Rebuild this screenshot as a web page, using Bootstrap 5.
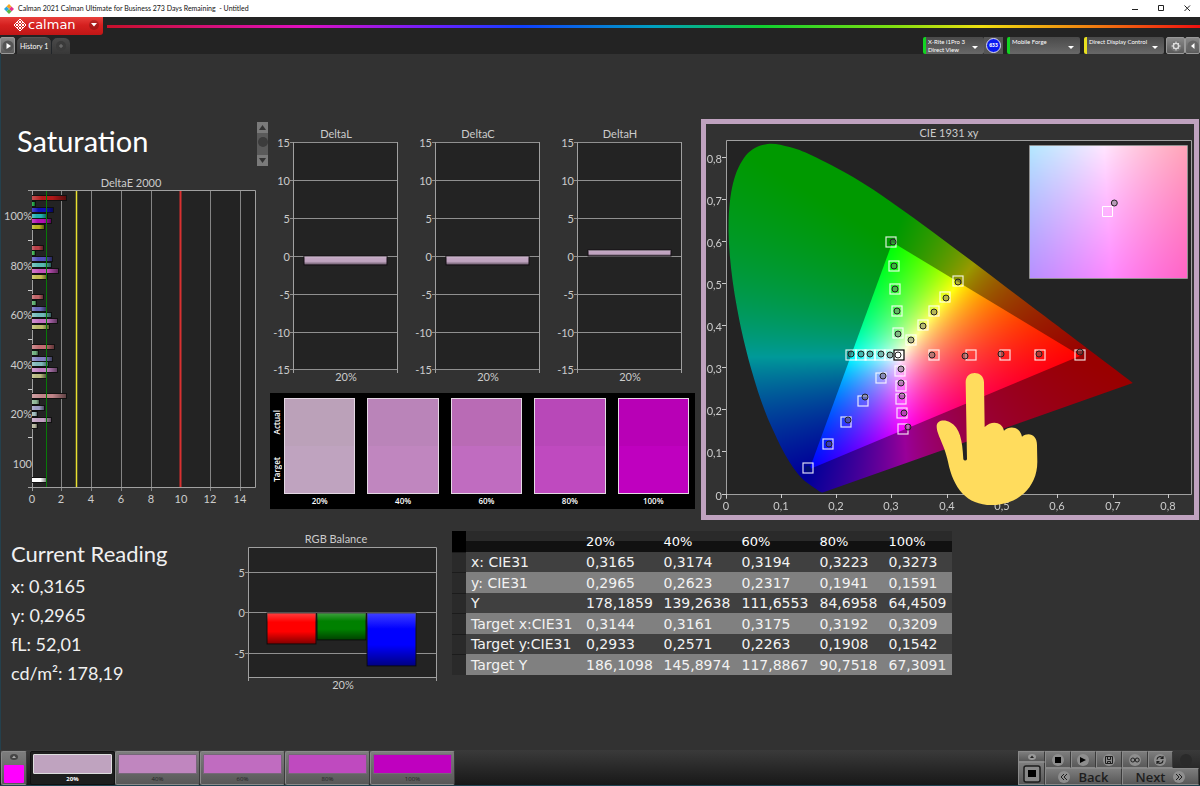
<!DOCTYPE html>
<html lang="en">
<head>
<meta charset="utf-8">
<meta name="viewport" content="width=device-width, initial-scale=1">
<title>Calman 2021 - Untitled</title>
<link href="https://cdn.jsdelivr.net/npm/bootstrap@5.3.0/dist/css/bootstrap.min.css" rel="stylesheet">
<style>
  body { background: #323232; color: #fff; font-family: Lato, "Liberation Sans", sans-serif; font-size: 12px; line-height: 16px; }
  button { color: inherit; border: 0; padding: 0; }
  svg { display: block; }

  .titlebar { background: #fff; color: #111; height: 17px; font-size: 7px; line-height: 17px; padding-left: 4px; }
  .titlebar .wintitle { white-space: pre; }
  .win-btn { background: none; width: 26px; height: 17px; display: grid; place-items: center; color: #222; }

  .topstrip { background: #232323; }
  .brand { width: 103px; height: 18px; background: linear-gradient(#e8403c, #d5201f 45%, #c01616); border-radius: 0 0 3px 0; font: 13px/16px "DejaVu Sans", sans-serif; padding: 0 4px 2px 13px; gap: 1px; }
  .round-caret { width: 10px; height: 10px; border-radius: 50%; background: #00000030; display: grid; place-items: center; }
  .rainbow { height: 3px; background: linear-gradient(90deg, #c8102a 0, #e010c0 18%, #6a20ff 30%, #1040ff 38%, #00a0c0 50%, #10d030 60%, #80e010 72%, #f0e010 80%, #f08010 90%, #f01010); }
  .toolrow { padding-top: 2px; height: 19px; }
  .grey-btn { background: linear-gradient(#8a8a8a, #5a5a5a); border: 1px solid #999; border-radius: 2px; height: 17px; display: grid; place-items: center; }
  .hist-tab { background: linear-gradient(#4a4a4a, #383838); height: 17px; font-size: 7px; line-height: 17px; border-top: 1px solid #555; padding: 0 3px; }
  .source { height: 17px; background: linear-gradient(#4a4a4a, #686868); border-radius: 2px; font-size: 6px; line-height: 8px; padding: 1px 6px 0 2px; text-align: left; border-left: 3px solid #12d422; }
  .source.warn { border-left-color: #e8e020; }
  .count { width: 19px; height: 17px; background: #555; display: grid; place-items: center; }
  .count span { width: 15px; height: 15px; border-radius: 50%; background: #0a1af0; border: 1px solid #dde; font: bold 5px/13px "Open Sans", sans-serif; text-align: center; }

  .workspace { padding-top: 65px; box-shadow: inset 1px 0 #24404c; }
  .upper { display: grid; grid-template-columns: minmax(0, 270fr) minmax(0, 431fr) minmax(0, 499fr); }
  .lower { display: grid; grid-template-columns: minmax(0, 228fr) minmax(0, 224fr) minmax(0, 500fr) minmax(0, 248fr); margin-top: 10px; }
  .upper svg.plot, .lower svg.plot { width: 100%; height: auto; }
  .plot text { font-family: Lato, sans-serif; font-size: 11px; fill: #ccc; }

  .page-title { font-size: 29px; line-height: 40px; font-weight: 400; margin: 2px 0 0 17px; }
  .scroller { width: 11px; height: 44px; background: #5a5a5a; margin: 3px 2px 0 0; border-radius: 1px; }
  .scroller button { width: 11px; height: 11px; background: #7a7a7a; display: grid; place-items: center; }
  .scroller .thumb { width: 10px; height: 10px; border-radius: 50%; background: #3c3c3c; }

  .swatches { background: #000; margin-right: 6px; padding: 5px 6px 0 0; height: 116px; font: 600 8px/14px "Open Sans", sans-serif; }
  .side-label { width: 14px; height: 96px; }
  .side-label span { writing-mode: vertical-rl; transform: rotate(180deg); line-height: 14px; }
  .swatch-grid { display: grid; grid-template-columns: repeat(5, minmax(0, 1fr)); gap: 12px; flex: 1; text-align: center; }
  .patch { height: 96px; border: 1px solid #e4d8e4; }

  .cie { border: 5px solid #bfa2bf; margin-right: 1px; }

  .reading h2 { font-size: 22px; line-height: 28px; margin: 10px 0 4px; font-weight: 400; }
  .reading { padding-left: 11px; font-size: 18px; line-height: 29px; color: #f0f0f0; }

  .data { font: 14px/20px "DejaVu Sans", sans-serif; color: #f2f2f2; width: 100%; table-layout: fixed; border-collapse: collapse; margin-top: 1px; }
  .data td, .data th { padding: 0 0 0 5px; font-weight: 400; white-space: nowrap; height: 20px; }
  .data thead th { height: 21px; font-size: 13px; background: linear-gradient(#2a2a2a 50%, #111 50%); color: #fff; }
  .data thead th:first-child { background: #000; }
  .data tbody tr { background: #404040; }
  .data tbody tr:nth-child(even) { background: #808080; }
  .data tbody tr:nth-child(even) td { height: 21px; }
  .data tbody td:first-child { background: #2a2a2a; border-top: 1px solid #1c1c1c; }

  .bottombar { background: linear-gradient(#3a3a3a, #181818); height: 36px; padding: 1px 1px 0 1px; border-bottom: 1px solid #1f4350; }
  .metal { background: linear-gradient(#7d7d7d, #585858); border: 1px solid #8a8a8a; border-right-color: #3a3a3a; }
  .level { width: 85px; height: 34px; padding: 2px; font: 6px/9px "Open Sans", sans-serif; color: #222; border-radius: 2px; }
  .level .chip { height: 20px; border: 1px solid #77677a; border-radius: 1px; margin-bottom: 1px; }
  .level.active { background: #1e1e1e; border-color: #111; color: #fff; font-weight: 700; }
  .level.active .chip { border-color: #ddd; }
  .current { width: 26px; height: 34px; border-radius: 2px; margin-right: 3px; }
  .current .hue { width: 20px; height: 18px; background: #f0f; border-radius: 1px; margin: 5px auto 0; }
  .dot { width: 12px; height: 12px; border-radius: 50%; background: #8e8e8e; display: grid; place-items: center; color: #1e1e1e; }
  .transport { width: 154px; display: grid; grid-template-columns: repeat(6, minmax(0, 1fr)); grid-template-rows: 17px 17px; }
  .transport button { display: flex; align-items: center; justify-content: center; color: #1e1e1e; }
  .transport .nav-btn { grid-column: span 3; font: 600 13px/16px "Open Sans", sans-serif; gap: 8px; }
</style>
</head>
<body>
<div class="d-flex flex-column min-vh-100">

  <header>
    <div class="titlebar d-flex align-items-center">
      <svg width="10" height="10" viewBox="0 0 10 10" class="me-1" aria-hidden="true">
        <path d="M5 0 7.500 2.500 5 5 2.500 2.500z" fill="#f5a623"/><path d="M2.500 2.500 5 5 2.500 7.500 0 5z" fill="#29a8df"/><path d="M7.500 2.500 10 5 7.500 7.500 5 5z" fill="#e8348b"/><path d="M5 5 7.500 7.500 5 10 2.500 7.500z" fill="#58b947"/>
      </svg>
      <span class="wintitle">Calman 2021 Calman Ultimate for Business 273 Days Remaining  - Untitled</span>
      <div class="d-flex ms-auto">
        <button class="win-btn" aria-label="Minimize"><svg width="6" height="6"><path d="M0 3.500h6" stroke="#222"/></svg></button>
        <button class="win-btn" aria-label="Maximize"><svg width="7" height="7"><path d="M.5.5h5v5h-5z" fill="none" stroke="#222"/></svg></button>
        <button class="win-btn" aria-label="Close"><svg width="7" height="7"><path d="M.5.5l5.500 5.500M6 .5L.5 6" stroke="#222"/></svg></button>
      </div>
    </div>
    <div class="topstrip">
      <div class="d-flex">
        <button class="brand d-flex align-items-center">
          <svg width="14" height="14" viewBox="0 0 14 14" fill="none" stroke="#fff" aria-hidden="true">
            <path d="M7 1 13 7 7 13 1 7zM4 4 10 10M10 4 4 10M5.500 2.500 11.500 8.500M8.500 2.500 2.500 8.500M2.500 5.500 8.500 11.500M11.500 5.500 5.500 11.500" stroke-width="1"/>
          </svg>
          <span>calman</span>
          <span class="round-caret ms-auto"><svg width="6" height="4"><path d="M0 0h6L3 3.500z" fill="#fff"/></svg></span>
        </button>
        <div class="rainbow flex-grow-1 ms-1 mt-2"></div>
      </div>
      <div class="toolrow d-flex">
        <button class="grey-btn" style="width:15px" aria-label="Play"><svg width="12" height="12"><circle cx="6" cy="6" r="5.500" fill="#555"/><path d="M4.500 3v6L9 6z" fill="#fff"/></svg></button>
        <button class="hist-tab rounded-top" style="margin-left:2px">History 1</button>
        <button class="hist-tab rounded-top border-start border-dark" aria-label="Add"><svg width="12" height="10"><circle cx="6" cy="5" r="5" fill="#3a3a3a"/><path d="M4 5h4M6 3v4" stroke="#777"/></svg></button>
        <div class="d-flex ms-auto">
          <button class="source d-flex" style="width:61px"><span class="flex-grow-1 text-nowrap">X-Rite i1Pro 3<br>Direct View</span><svg class="mt-2" width="6" height="4"><path d="M0 0h6L3 3z" fill="#fff"/></svg></button>
          <div class="count me-1"><span>633</span></div>
          <button class="source d-flex me-1" style="width:73px"><span class="flex-grow-1 text-nowrap">Mobile Forge</span><svg class="mt-2" width="6" height="4"><path d="M0 0h6L3 3z" fill="#fff"/></svg></button>
          <button class="source warn d-flex" style="width:80px"><span class="flex-grow-1 text-nowrap">Direct Display Control</span><svg class="mt-2" width="6" height="4"><path d="M0 0h6L3 3z" fill="#fff"/></svg></button>
          <button class="grey-btn" style="width:19px;margin-left:2px" aria-label="Settings"><svg width="12" height="12"><circle cx="6" cy="6" r="5.500" fill="#777"/><circle cx="6" cy="6" r="2.600" fill="none" stroke="#ddd" stroke-width="1.400"/><path d="M6 1.500v9M1.500 6h9M3 3l6 6M9 3l-6 6" stroke="#ddd" stroke-dasharray="1.500 6 1.500"/></svg></button>
          <button class="grey-btn" style="width:15px" aria-label="Collapse"><svg width="12" height="12"><circle cx="6" cy="6" r="5.500" fill="#666"/><path d="M7.500 3v6L4 6z" fill="#fff"/></svg></button>
        </div>
      </div>
    </div>
  </header>

  <main class="workspace flex-grow-1">
    <section class="upper">
      <div>
        <div class="d-flex justify-content-between">
          <h1 class="page-title">Saturation</h1>
          <div class="scroller d-flex flex-column align-items-center">
            <button aria-label="Up"><svg width="7" height="5"><path d="M0 5h7L3.500 0z" fill="#333"/></svg></button>
            <div class="thumb mt-1"></div>
            <button class="mt-auto" aria-label="Down"><svg width="7" height="5"><path d="M0 0h7L3.500 5z" fill="#333"/></svg></button>
          </div>
        </div>
        <svg class="plot mt-2" id="deltaE" viewBox="0 174 270 340" role="img" aria-label="DeltaE 2000"></svg>
      </div>

      <div>
        <svg class="plot" id="deltas" viewBox="270 119 431 274" role="img" aria-label="DeltaL, DeltaC and DeltaH"></svg>
        <div class="swatches d-flex">
          <div class="side-label d-flex flex-column justify-content-around align-items-center"><span>Actual</span><span>Target</span></div>
          <div class="swatch-grid" id="swatches"></div>
        </div>
      </div>

      <div class="cie"><svg class="plot" id="cie" viewBox="706 124 488 391" role="img" aria-label="CIE 1931 xy"></svg></div>
    </section>

    <section class="lower">
      <div class="reading">
        <h2>Current Reading</h2>
        <div>x: 0,3165</div><div>y: 0,2965</div><div>fL: 52,01</div><div>cd/m²: 178,19</div>
      </div>
      <svg class="plot" id="rgb" viewBox="228 530 224 165" role="img" aria-label="RGB Balance"></svg>
      <div>
        <table class="data">
          <colgroup><col style="width:2.8%"><col style="width:23%"><col style="width:15.500%"><col style="width:15.600%"><col style="width:15.600%"><col style="width:13.800%"><col></colgroup>
          <thead><tr><th></th><th></th><th>20%</th><th>40%</th><th>60%</th><th>80%</th><th>100%</th></tr></thead>
          <tbody>
            <tr><td></td><td>x: CIE31</td><td>0,3165</td><td>0,3174</td><td>0,3194</td><td>0,3223</td><td>0,3273</td></tr>
            <tr><td></td><td>y: CIE31</td><td>0,2965</td><td>0,2623</td><td>0,2317</td><td>0,1941</td><td>0,1591</td></tr>
            <tr><td></td><td>Y</td><td>178,1859</td><td>139,2638</td><td>111,6553</td><td>84,6958</td><td>64,4509</td></tr>
            <tr><td></td><td>Target x:CIE31</td><td>0,3144</td><td>0,3161</td><td>0,3175</td><td>0,3192</td><td>0,3209</td></tr>
            <tr><td></td><td>Target y:CIE31</td><td>0,2933</td><td>0,2571</td><td>0,2263</td><td>0,1908</td><td>0,1542</td></tr>
            <tr><td></td><td>Target Y</td><td>186,1098</td><td>145,8974</td><td>117,8867</td><td>90,7518</td><td>67,3091</td></tr>
          </tbody>
        </table>
      </div>
    </section>
  </main>

  <footer class="bottombar d-flex">
    <button class="metal current" aria-label="Current colour"><svg class="mx-auto" width="8" height="6"><ellipse cx="4" cy="3" rx="4" ry="3" fill="#444"/><path d="M2 4h4L4 1.500z" fill="#aaa"/></svg><div class="hue"></div></button>
    <div class="d-flex" id="levels"></div>
    <div class="d-flex ms-auto">
      <div class="d-flex flex-column" style="width:27px">
        <button class="metal d-flex justify-content-center align-items-center" style="height:11px" aria-label="Expand"><svg width="8" height="6"><ellipse cx="4" cy="3" rx="4" ry="3" fill="#999"/><path d="M2 4h4L4 1.500z" fill="#222"/></svg></button>
        <button class="metal d-flex justify-content-center align-items-center flex-grow-1" aria-label="Window"><svg width="18" height="18"><rect x="1" y="1" width="16" height="16" rx="2" fill="#888" stroke="#1c1c1c" stroke-width="1.500"/><path d="M5 5h8v7H5z" fill="#000"/></svg></button>
      </div>
      <div class="transport">
        <button class="metal" aria-label="Stop"><span class="dot"><svg width="6" height="6"><path d="M0 0h6v6H0z"/></svg></span></button>
        <button class="metal" aria-label="Read"><span class="dot"><svg width="6" height="6"><path d="M0 0v6l6-3z"/></svg></span></button>
        <button class="metal" aria-label="Read series"><span class="dot"><svg width="8" height="8" fill="none" stroke="#1e1e1e"><path d="M.5.5h7v7h-7zM2.500 1v2.500h3V1M2.500 7V5.500h3V7"/></svg></span></button>
        <button class="metal" aria-label="Continuous"><span class="dot"><svg width="10" height="6" fill="none" stroke="#1e1e1e"><circle cx="2.800" cy="3" r="2"/><circle cx="7.200" cy="3" r="2"/></svg></span></button>
        <button class="metal" aria-label="Refresh"><span class="dot"><svg width="10" height="10" fill="none" stroke="#1e1e1e" stroke-width="1.200"><path d="M2 4.500A3 3 0 0 1 7.500 3M8 1v2.500H5.500M8 5.500A3 3 0 0 1 2.500 7M2 9V6.500h2.500"/></svg></span></button>
        <div class="d-flex justify-content-center align-items-center"><svg width="12" height="12"><circle cx="6" cy="6" r="6" fill="#2a2a2a"/></svg></div>
        <button class="metal nav-btn"><span class="dot"><svg width="8" height="8" fill="none" stroke="#1e1e1e"><path d="M4 1 1 4l3 3M7 1 4 4l3 3"/></svg></span>Back</button>
        <button class="metal nav-btn">Next<span class="dot"><svg width="8" height="8" fill="none" stroke="#1e1e1e"><path d="M1 1l3 3-3 3M4 1l3 3-3 3"/></svg></span></button>
      </div>
    </div>
  </footer>
</div>

<script src="https://cdn.jsdelivr.net/npm/bootstrap@5.3.0/dist/js/bootstrap.bundle.min.js"></script>
<script>
const rect = (x, y, w, h, a) => `<rect x="${x}" y="${y}" width="${w}" height="${h}" ${a}/>`;
const path = (d, stroke, w = 1) => `<path d="${d}" fill="none" stroke="${stroke}" stroke-width="${w}"/>`;
const text = (x, y, t, anchor = 'middle') => `<text x="${x}" y="${y}" text-anchor="${anchor}">${t}</text>`;
const levels = ['20%', '40%', '60%', '80%', '100%'];

/* Shading shared by the bars */
const shade = (id, dir) => `<linearGradient id="${id}" ${dir}><stop offset="0" stop-color="#fff" stop-opacity=".25"/><stop offset=".3" stop-color="#fff" stop-opacity="0"/><stop offset=".6" stop-opacity="0"/><stop offset="1" stop-opacity=".5"/></linearGradient>`;

/* DeltaE 2000 */
(() => {
  let s = `<defs>${shade('sh1', 'x2="1" y2="0"')}</defs>` + text(131, 187, 'DeltaE 2000') + rect(32, 191, 223, 296, 'fill="#232323"');
  [61.5, 91.5, 121.5, 151.5, 210.5, 240.5].forEach(x => s += path(`M${x} 191V491`, '#858585'));
  s += path('M28 190.5H255.5V487.5H28M32.500 190V491', '#a0a0a0');
  [240.5, 290.5, 339.5, 389.5, 437.5].forEach(y => s += path(`M28 ${y}h4`, '#ccc'));
  const colors = [
    ['#b01818', '#20a040', '#1010b0', '#20b0b0', '#b010b0', '#b8b020'],
    ['#b84048', '#40b050', '#5050b8', '#58b8b0', '#c050b8', '#c0b850'],
    ['#c06468', '#60b070', '#6868b8', '#70b8b8', '#c070c0', '#b8b868'],
    ['#c06c70', '#70b080', '#8080c0', '#80b8b8', '#c080c0', '#b8b880'],
    ['#c08488', '#90b898', '#9c9cc4', '#a0bcbc', '#c0a0c0', '#b8b8a0']];
  const lengths = [[34, 3, 21, 15, 19, 12], [11, 3, 20, 19, 26, 15], [11, 4, 14, 19, 25, 17], [22, 6, 20, 16, 25, 14], [34, 7, 12, 5, 19, 5]];
  const bar = (y, w, c) => rect(32, y - 3, w + 1, 6, 'fill="#111"') + rect(32, y - 2, w, 4, `fill="${c}"`) + rect(32, y - 2, w, 4, 'fill="url(#sh1)"');
  lengths.forEach((row, g) => row.forEach((w, i) => s += bar(Math.round(198 + g * 49.6 + i * 5.87), w, colors[g][i])));
  s += bar(480, 14, '#fff');
  s += path('M46.500 191V487', '#087a08') + path('M76.500 191V487', '#e8e030', 1.5) + path('M180.500 191V487', '#d83030', 2);
  ['100%', '80%', '60%', '40%', '20%', '100'].forEach((t, i) => s += text(32, Math.round(220 + i * 49.5), t, 'end'));
  for (let i = 0; i < 8; i++) s += text(Math.round(31.5 + i * 29.8), 503, i * 2);
  deltaE.innerHTML = s;
})();

/* DeltaL / DeltaC / DeltaH */
(() => {
  let s = `<defs>${shade('sh2', 'x2="0" y2="1"')}</defs>`;
  [['DeltaL', 294, 256, 9], ['DeltaC', 436, 256, 9], ['DeltaH', 578, 250, 6]].forEach(([name, x, by, bh]) => {
    s += text(x + 42, 138, name) + rect(x, 142, 104, 228, 'fill="#232323"');
    [142, 180, 218, 256, 294, 332, 369].forEach((y, i) => {
      s += path(`M${x - 4} ${y + .5}H${x + 104}`, '#909090') + text(x - 4, y + 5, 15 - i * 5, 'end');
    });
    s += path(`M${x - .5} 142V373M${x + 103.5} 142V373`, '#a0a0a0') + text(x + 52, 381, '20%');
    s += rect(x + 10, by, 83, bh, 'fill="#c0a4c0" stroke="#140f14"') + rect(x + 10, by, 83, bh, 'fill="url(#sh2)"');
  });
  deltas.innerHTML = s;
})();

/* RGB balance */
(() => {
  let s = `<defs>${shade('sh3', 'x2="0" y2="1"')}</defs>` + text(336, 543, 'RGB Balance') + rect(249, 547, 188, 130, 'fill="#232323"');
  [[572.5, '5'], [612.5, '0'], [653.5, '-5']].forEach(([y, t]) => s += path(`M245 ${y}H436`, '#909090') + text(245, y + 4, t, 'end'));
  s += path('M248.500 681V547.500H436.500V681M248.500 677.500H436.500', '#a0a0a0') + text(343, 689, '20%');
  [[267, 31, '#f00'], [317, 27, '#008000'], [367, 53, '#00f']].forEach(([x, h, c]) =>
    s += rect(x, 613, 49, h, `fill="${c}" stroke="#111"`) + rect(x, 613, 49, h, 'fill="url(#sh3)"'));
  rgb.innerHTML = s;
})();

/* Swatches and level buttons */
const actual = ['#bba1b9', '#ba84b9', '#b96bb5', '#b848b8', '#b800b6'];
const target = ['#bfa3bf', '#c086bf', '#c06cc0', '#bf4abf', '#bf00bf'];
swatches.innerHTML = levels.map((l, i) => `<div><div class="patch" style="background:linear-gradient(${actual[i]} 50%, ${target[i]} 50%)"></div>${l}</div>`).join('');
document.getElementById('levels').innerHTML = levels.map((l, i) => `<button class="metal level ${i ? '' : 'active'}"><div class="chip" style="background:${target[i]}"></div>${l}</button>`).join('');

/* CIE 1931 chromaticity */
(() => {
  const X = x => 726.5 + x * 553, Y = y => 494.5 - y * 420.5;
  const locus = [[.1741,.005],[.1714,.0051],[.1644,.0109],[.1566,.0177],[.144,.0297],[.1355,.0399],[.1241,.0578],[.1096,.0868],[.0913,.1327],[.0687,.2007],[.0454,.295],[.0235,.4127],[.0082,.5384],[.0039,.6548],[.0139,.7502],[.0389,.812],[.0743,.8338],[.1142,.8262],[.1547,.8059],[.2296,.7543],[.3016,.6923],[.3731,.6245],[.4441,.5547],[.5125,.4866],[.5752,.4242],[.627,.3725],[.6915,.3083],[.7347,.2653]];
  /* Linear RGB, scaled so that the strongest channel is full */
  const color = (x, y) => {
    y = Math.max(y, .001);
    const a = x / y, b = (1 - x - y) / y;
    const c = [3.2406 * a - 1.5372 - .4986 * b, -.9689 * a + 1.8758 + .0415 * b, .0557 * a - .204 + 1.057 * b].map(v => Math.max(v, 0));
    const m = Math.max(...c);
    return c.map(v => 255 * v / m);
  };
  const field = (w, h, fx, fy, k) => {
    const c = document.createElement('canvas'); c.width = w; c.height = h;
    const g = c.getContext('2d'), d = g.createImageData(w, h);
    for (let j = 0, p = 0; j < h; j++) for (let i = 0; i < w; i++, p += 4) {
      const q = color(fx(i), fy(j));
      d.data[p] = q[0] * k; d.data[p + 1] = q[1] * k; d.data[p + 2] = q[2] * k; d.data[p + 3] = 255;
    }
    g.putImageData(d, 0, 0);
    return c;
  };

  let s = text(949, 137, 'CIE 1931 xy') + rect(726, 141, 466, 353, 'fill="#232323"');
  s += '<foreignObject x="726" y="141" width="466" height="354"><canvas id="gamut" width="466" height="354" style="display:block"></canvas></foreignObject>';
  s += path('M726.500 499V140.500H1191.500V494.500H722', '#a0a0a0');
  for (let i = 0; i < 9; i++) {
    const t = i ? '0,' + i : '0', x = Math.round(X(i / 10)), y = Math.round(Y(i / 10));
    s += path(`M${x - .5} 494v4M722 ${y - .5}h4`, '#ccc') + text(x - 1, 510, t) + text(722, y + 5, t, 'end');
  }
  const squares = [[891,242],[894,266],[895,289],[897,311],[898,333],[911,340],[923,325],[934,311],[945,297],[958,281],[851,355],[861,355],[870,355],[880,355],[890,355],[881,378],[863,401],[846,422],[828,444],[808,468],[900,371],[901,386],[901,399],[902,413],[903,429],[934,355],[971,355],[1005,355],[1040,355],[1080,355]];
  const circles = [[893,242],[894,266],[895,289],[897,311],[898,334],[911,340],[923,326],[934,312],[946,298],[958,282],[851,354],[861,354],[870,354],[881,354],[890,355],[883,376],[865,397],[848,420],[829,444],[901,369],[901,383],[902,396],[904,413],[908,427],[932,355],[965,356],[1001,354],[1039,354],[1080,352]];
  squares.forEach(([x, y]) => s += rect(x - 5, y - 5, 10, 10, 'fill="none" stroke="#fff" stroke-opacity=".85" stroke-width="1.200"'));
  s += rect(894, 350, 10, 10, 'fill="#fff" stroke="#000" stroke-width="1.200"');
  circles.forEach(([x, y]) => s += `<circle cx="${x}" cy="${y}" r="3" fill="#666" fill-opacity=".45" stroke="#222"/>`);
  s += '<circle cx="808" cy="469" r="3" fill="#001070"/><circle cx="898" cy="355" r="3" fill="#fff" stroke="#222"/>';
  s += '<foreignObject x="1030" y="146" width="157" height="132"><canvas id="detail" width="157" height="132" style="display:block"></canvas></foreignObject>';
  s += path('M1029.500 145.500h158v133h-158z', '#909090') + path('M1102.500 206.500h10v10h-10z', '#fff');
  s += '<circle cx="1114.300" cy="203" r="3" fill="#b79bb7" stroke="#222"/>';
  s += '<path transform="translate(940 115) scale(.3333)" fill="#ffdc5d" d="M-10 934C-10 917 12 912 30 922C60 938 67 975 70 1033a6 6 0 0 0 11 0L77 802C77 765 131 765 132 802L134 936C155 915 187 920 192 947C210 930 240 935 246 965C265 950 291 958 291 990L292 1040C292 1120 230 1170 155 1170C80 1170 40 1120 24 1040C12 985 -10 960 -10 934Z"/>';
  cie.innerHTML = s;

  const g = gamut.getContext('2d');
  const px = ([x, y]) => [X(x) - 726, Y(y) - 141];
  const clipDraw = (trace, k) => {
    g.save(); g.beginPath(); trace(); g.closePath(); g.clip();
    g.drawImage(field(466, 354, i => (i - .5) / 553, j => (353.5 - j) / 420.5, k), 0, 0);
    g.restore();
  };
  clipDraw(() => {
    const p = locus.map(px);
    g.moveTo(...p[0]);
    for (let i = 0; i < p.length - 1; i++) {
      const a = p[Math.max(i - 1, 0)], b = p[i], c = p[i + 1], d = p[Math.min(i + 2, p.length - 1)];
      g.bezierCurveTo(b[0] + (c[0] - a[0]) / 6, b[1] + (c[1] - a[1]) / 6, c[0] - (d[0] - b[0]) / 6, c[1] - (d[1] - b[1]) / 6, c[0], c[1]);
    }
  }, .6);
  clipDraw(() => [[.64, .33], [.3, .6], [.15, .06]].map(px).forEach(q => g.lineTo(...q)), 1);
  detail.getContext('2d').drawImage(field(157, 132, i => .2905 + i * .000309, j => .318 - j * .000378, 1), 0, 0);
})();
</script>
</body>
</html>
